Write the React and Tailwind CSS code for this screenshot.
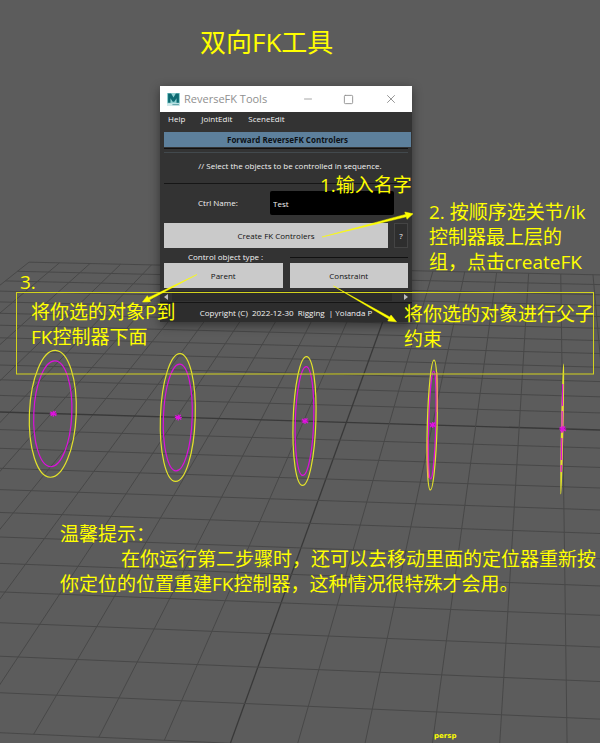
import React from "react";
import { Minus, Square, X } from "lucide-react";

const HALF = 12;
const STEPS = Array.from({ length: HALF * 2 + 1 }, (_, i) => i - HALF);

// Perspective floor: rows recede to a horizon at y = -155,
// columns converge at the vanishing point (555, -155).
const HORIZON = -155;
const VANISH_X = 555;

function rowLine(k) {
  const left = HORIZON + 1 / (0.0017637 - k * 0.0000531);
  const right = HORIZON + 1 / (0.0017094 - k * 0.0000514);
  return { left, slope: (right - left) / 600 };
}

function crossing(j, k) {
  const { left, slope } = rowLine(k);
  const d = (318.3 + j * 49.1 - VANISH_X) / 655;
  const x = (VANISH_X + d * (left - HORIZON)) / (1 - d * slope);
  return { x, y: left + slope * x };
}

function GridLine({ from, to, axis }) {
  return (
    <line
      x1={from.x}
      y1={from.y}
      x2={to.x}
      y2={to.y}
      stroke={axis ? "#393939" : "#484848"}
      strokeWidth={axis ? 1.3 : 1}
    />
  );
}

function FloorGrid() {
  return (
    <svg className="absolute top-0 left-0" width="600" height="743" viewBox="0 0 600 743" aria-hidden="true">
      {STEPS.map((n) => (
        <g key={n}>
          <GridLine from={crossing(-HALF, n)} to={crossing(HALF, n)} axis={n === 0} />
          <GridLine from={crossing(n, -HALF)} to={crossing(n, HALF)} axis={n === 0} />
        </g>
      ))}
    </svg>
  );
}

const RINGS = [
  { cx: 52.8, cy: 413.8, rx: 23.4, ry: 63.5, ix: 19, iy: 53, tilt: 2.4 },
  { cx: 177.8, cy: 417.5, rx: 17.4, ry: 64, ix: 14.4, iy: 53.5, tilt: 2 },
  { cx: 304.5, cy: 421, rx: 11.4, ry: 64.5, ix: 9.2, iy: 54.5, tilt: 1.8 },
  { cx: 432.2, cy: 425, rx: 4.9, ry: 65, ix: 3.6, iy: 54, tilt: 1.6 },
  { cx: 562.2, cy: 429, rx: 0.6, ry: 65, ix: 0.6, iy: 46, tilt: 1.2 },
];

function Rings() {
  return (
    <g fill="none" strokeWidth="1.2">
      {RINGS.map((r) => (
        <g key={r.cx}>
          <g transform={`rotate(${r.tilt} ${r.cx} ${r.cy})`}>
            <ellipse cx={r.cx} cy={r.cy} rx={r.ix} ry={r.iy} stroke="#dc10dc" />
            <ellipse cx={r.cx} cy={r.cy} rx={r.rx} ry={r.ry} stroke="#e3e32a" />
          </g>
          <path
            d={`M${r.cx - 2.5} ${r.cy - 2}l6 4M${r.cx - 2} ${r.cy + 2}l5 -4.500M${r.cx - 3} ${r.cy}h7M${r.cx + 0.5} ${r.cy - 3}v6`}
            stroke="#e010e0"
          />
        </g>
      ))}
      <path d="M427.500 440Q427 460 428.500 478M436.800 372Q437.600 390 437 412" stroke="#f08070" />
      <path d="M562.700 384L561.200 472" stroke="#dc10dc" strokeDasharray="22 5" />
    </g>
  );
}

function MarkUp() {
  return (
    <svg
      className="pointer-events-none absolute top-0 left-0"
      width="600"
      height="743"
      viewBox="0 0 600 743"
      aria-hidden="true"
    >
      <Rings />
      <rect x="16.500" y="292.500" width="577" height="81.500" fill="none" stroke="#d2d21e" />
      <g fill="#ffff00" stroke="#ffff00" strokeWidth="0.5" strokeLinejoin="round">
        <path d="M322 237L405.500 214.400L404.800 212L413 213.800L407 219.300L406.300 216.800Z" />
        <path d="M197 274.500L149.500 299.800L150.500 301.700L142.500 302L147.300 295.700L148.400 297.700Z" />
        <path d="M333.500 286L389.800 317L391 315L396.500 321.800L387.800 321L388.900 319Z" />
      </g>
    </svg>
  );
}

function MayaIcon() {
  return (
    <svg className="h-[13px] w-[13px]" viewBox="0 0 12 12" aria-hidden="true">
      <rect width="12" height="12" fill="#cfe9ea" />
      <path d="M0 0h12v9.500H0z" fill="#8fd0d1" />
      <path d="M1 0.500H3.800l2.200 3.700L8.200 0.500H11v8.500H8.800V4.800L6.700 8H5.300L3.200 4.800V9H1z" fill="#0d6a72" />
      <path d="M5 10.700h6" stroke="#5fa5aa" strokeWidth="1" />
    </svg>
  );
}

function PanelButton({ children, className = "" }) {
  return (
    <button type="button" className={`h-[25px] bg-[#cacaca] text-center font-medium text-[#111111] ${className}`}>
      {children}
    </button>
  );
}

function ToolWindow() {
  return (
    <section
      aria-label="ReverseFK Tools"
      className="absolute top-[86px] left-40 w-[252px] bg-[#333333] font-['Open_Sans','Noto_Sans',sans-serif] text-[8px] leading-3 font-medium text-[#f2f2f2] shadow-[0_3px_10px_rgba(0,0,0,0.45)]"
    >
      <header className="flex h-[26px] items-center bg-white pl-[7px] text-[#8f8f8f]">
        <MayaIcon />
        <h2 className="ml-1 flex-1 text-[11px] leading-4 font-normal">ReverseFK Tools</h2>
        <div className="flex">
          <button type="button" aria-label="Minimize" className="flex w-[41px] items-center justify-center">
            <Minus size={12} strokeWidth={1.6} />
          </button>
          <button type="button" aria-label="Maximize" className="flex w-[41px] items-center justify-center">
            <Square size={11} strokeWidth={2} />
          </button>
          <button type="button" aria-label="Close" className="flex w-[43px] items-center justify-center">
            <X size={14} strokeWidth={1.6} />
          </button>
        </div>
      </header>

      <nav className="flex gap-4 px-2 pt-px pb-[7px]">
        <button type="button">Help</button>
        <button type="button">JointEdit</button>
        <button type="button">SceneEdit</button>
      </nav>

      <div className="px-1">
        <h3 className="-mr-[3px] h-[15px] bg-[#5d809c] text-center leading-[16px] font-bold text-[#0c1116]">
          Forward ReverseFK Controlers
        </h3>
        <div className="mt-px h-px bg-[#111111]" />
        <div className="mt-[3px] h-px bg-[#42494d]" />
        <p className="mt-[7px] pl-2 text-center">{"// Select the objects to be controlled in sequence."}</p>
        <div className="mt-[11px] h-px bg-[#161616]" />

        <div className="mt-[7px] flex h-6 items-center">
          <label htmlFor="ctrl-name" className="w-[106px] pl-[34px]">
            Ctrl Name:
          </label>
          <input
            id="ctrl-name"
            defaultValue="Test"
            className="h-6 w-[124px] rounded-xs bg-black px-[3px] text-[#f2f2f2] outline-none"
          />
        </div>

        <div className="mt-2 flex gap-[6px]">
          <PanelButton className="flex-1">Create FK Controlers</PanelButton>
          <button type="button" className="w-[14px] border border-[#444444] bg-[#2e2e2e]">
            ?
          </button>
        </div>

        <div className="mt-[3px] grid grid-cols-2 items-center gap-[7px]">
          <span className="pl-6">Control object type :</span>
          <span className="h-px bg-[#111111]" />
        </div>
        <div className="grid grid-cols-2 gap-[7px]">
          <PanelButton>Parent</PanelButton>
          <PanelButton>Constraint</PanelButton>
        </div>
      </div>

      <div className="mt-[3px] flex h-[10px] items-center justify-between border-t border-[#292929] px-1">
        <svg width="4" height="6" viewBox="0 0 4 6" aria-hidden="true">
          <path d="M4 0v6L0 3z" fill="#bdbdbd" />
        </svg>
        <div className="mr-3 ml-1 h-2 flex-1 bg-[#2b2b2b]" />
        <svg width="4" height="6" viewBox="0 0 4 6" aria-hidden="true">
          <path d="M0 0v6l4-3z" fill="#bdbdbd" />
        </svg>
      </div>

      <footer className="mt-px border-t border-[#151515] bg-[#2d2d2d] pt-1 pb-[3px] text-center whitespace-pre">
        {"Copyright (C)  2022-12-30  Rigging  | Yolanda P"}
      </footer>
    </section>
  );
}

export default function App() {
  return (
    <main className="relative min-h-[743px] w-full overflow-hidden bg-[#5c5c5c] font-['Open_Sans','Noto_Sans_CJK_SC',sans-serif] text-[19px] leading-[25px] text-[#ffff00]">
      <FloorGrid />
      <ToolWindow />
      <MarkUp />

      <h1 className="absolute top-6 left-[200px] text-[26px] leading-9 whitespace-nowrap">双向FK工具</h1>

      <p className="absolute top-[173px] left-80 whitespace-nowrap">1.输入名字</p>
      <p className="absolute top-[200px] left-[429px] whitespace-nowrap">
        2. 按顺序选关节/ik
        <br />
        控制器最上层的
        <br />
        组，点击createFK
      </p>
      <p className="absolute top-[270px] left-5">3.</p>
      <p className="absolute top-[300px] left-[31px] whitespace-nowrap">
        将你选的对象P到
        <br />
        FK控制器下面
      </p>
      <p className="absolute top-[302px] left-[404px] whitespace-nowrap">
        将你选的对象进行父子
        <br />
        约束
      </p>

      <div className="absolute top-[522px] left-[60px] whitespace-nowrap">
        <p>温馨提示：</p>
        <p className="pl-[61px]">在你运行第二步骤时，还可以去移动里面的定位器重新按</p>
        <p>你定位的位置重建FK控制器，这种情况很特殊才会用。</p>
      </div>

      <span className="absolute top-[731px] left-[434px] font-['DejaVu_Sans',sans-serif] text-[7px] leading-[10px] font-bold">
        persp
      </span>
    </main>
  );
}
